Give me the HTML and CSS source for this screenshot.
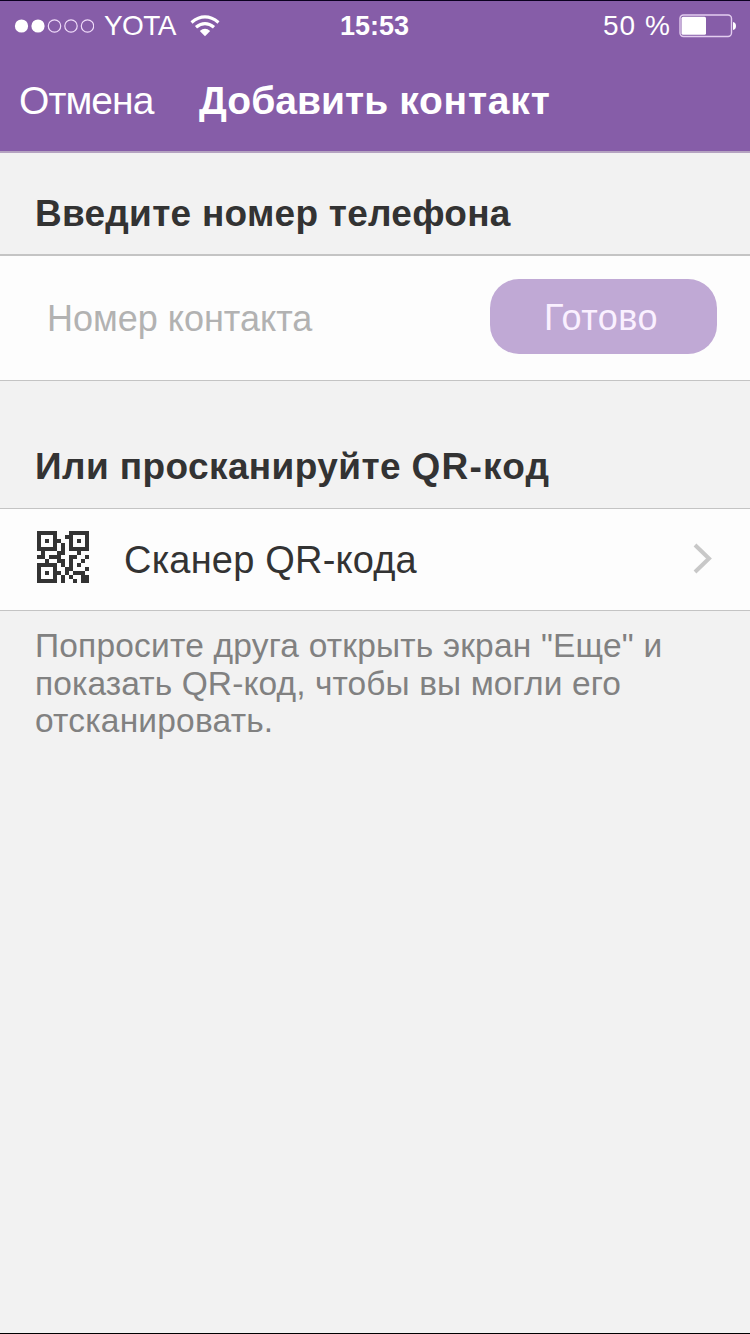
FILE: index.html
```html
<!DOCTYPE html>
<html lang="ru">
<head>
<meta charset="utf-8">
<title>Добавить контакт</title>
<link rel="stylesheet" href="styles.css">
</head>
<body>
<div class="screen">
  <header class="header">
    <div class="status">
      <svg class="signal" width="80" height="16" viewBox="0 0 80 16">
        <circle cx="7.500" cy="8" r="6.600" fill="#fff"/><circle cx="24" cy="8" r="6.600" fill="#fff"/>
        <g fill="none" stroke="#f0dcfa" stroke-width="1.200"><circle cx="40.500" cy="8" r="6.200"/><circle cx="57" cy="8" r="6.200"/><circle cx="73.500" cy="8" r="6.200"/></g>
      </svg>
      <span class="carrier">YOTA</span>
      <svg class="wifi" width="30" height="22" viewBox="0 0 30 22">
        <g fill="none" stroke="#fff" stroke-width="3.200"><path d="M1.500 7.400Q15 -3.500 28.500 7.400"/><path d="M6 12.300Q15 4.800 24 12.300"/></g>
        <path d="M9.800 16Q15 11.500 20.200 16L15 21.300Z" fill="#fff"/>
      </svg>
      <span class="clock">15:53</span>
      <span class="percent">50 %</span>
      <svg class="battery" width="58" height="24" viewBox="0 0 58 24">
        <rect x="1" y="1" width="51.500" height="21.500" rx="3.500" fill="none" stroke="#e3cdef" stroke-width="1.400"/>
        <rect x="2.500" y="2.700" width="24.500" height="18" rx="1.500" fill="#fff"/>
        <path d="M54 8Q57 8.500 57 12T54 16Z" fill="#fff"/>
      </svg>
    </div>
    <nav class="nav">
      <span class="cancel">Отмена</span>
      <h1 class="title">Добавить <span class="title-word">контакт</span></h1>
    </nav>
  </header>
  <h2 class="heading heading-phone">Введите номер телефона</h2>
  <section class="row row-phone">
    <span class="placeholder">Номер контакта</span>
    <button class="done">Готово</button>
  </section>
  <h2 class="heading heading-qr">Или просканируйте <span class="qr-word">QR-код</span></h2>
  <section class="row row-qr">
    <svg class="qr" width="52" height="52" viewBox="0 0 13 13" fill="#333">
      <path fill-rule="evenodd" d="M0 0h5v5H0zM1 1v3h3V1zM8 0h5v5H8zM9 1v3h3V1zM0 8h5v5H0zM1 9v3h3V9z"/>
      <path d="M2 2h1v1H2zM10 2h1v1h-1zM2 10h1v1H2z"/>
      <path d="M7 1h1v1H7zM5 2h1v1H5zM6 3h1v2H6zM1 5h1v1H1zM5 5h2v1H5zM10 5h1v1h-1zM0 6h2v1H0zM3 6h3v1H3zM8 6h2v1H8zM12 6h1v1h-1zM2 7h1v1H2zM5 7h2v1H5zM8 7h1v1H8zM11 7h1v1h-1zM6 8h1v1H6zM8 8h1v1H8zM10 8h1v1h-1zM7 9h2v1H7zM9 10h3v1H9zM12 9h1v1h-1zM5 10h1v1H5zM7 10h1v1H7zM6 11h1v2H6zM8 11h1v1H8zM11 11h2v2h-2zM9 12h1v1H9z"/>
    </svg>
    <span class="scanner">Сканер QR-кода</span>
    <svg class="chevron" width="20" height="32" viewBox="0 0 20 32"><path d="M3 3L17 16.500L3 30" fill="none" stroke="#c8c8c8" stroke-width="4"/></svg>
  </section>
  <p class="hint">Попросите друга открыть экран "Еще" и<br><span class="tight">показать QR-код, чтобы вы могли его</span><br>отсканировать.</p>
</div>
</body>
</html>
```
FILE: styles.css
```css
* { box-sizing: border-box; }
body { margin: 0; font-family: "Liberation Sans", Arial, sans-serif; }
.screen { width: 750px; height: 1334px; background: #f2f2f2; border-top: 1px solid #0b0020; border-bottom: 1px solid #000; overflow: hidden; }
.header { height: 152px; background: #865da8; border-bottom: 2px solid #b5a3c1; color: #fff; }
.status { height: 50px; padding-left: 14px; display: flex; align-items: center; font-size: 28px; }
.signal, .wifi, .battery, .qr, .chevron { flex: none; display: block; }
.carrier { margin-left: 10px; width: 86px; letter-spacing: -0.6px; white-space: nowrap; }
.clock { width: 70px; margin-left: 120px; font-size: 27px; font-weight: bold; white-space: nowrap; }
.percent { width: 68px; margin-left: 193px; letter-spacing: 1px; white-space: nowrap; }
.battery { margin-left: 8px; }
.nav { height: 100px; padding-left: 19px; display: flex; align-items: center; white-space: nowrap; }
.cancel { width: 180px; font-size: 39px; letter-spacing: -0.9px; }
.title { margin: 0; font-size: 39px; letter-spacing: 0.05px; }
.title-word { letter-spacing: 0.8px; }
.heading { margin: 0; padding-left: 35px; font-size: 37px; color: #333; white-space: nowrap; }
.heading-phone { height: 101px; line-height: 121px; letter-spacing: 0.27px; }
.heading-qr { height: 127px; line-height: 171px; letter-spacing: 0.4px; }
.qr-word { letter-spacing: 1.2px; }
.row { display: flex; align-items: center; background: #fdfdfd; border-top: 1px solid #c4c4c4; border-bottom: 1px solid #c4c4c4; white-space: nowrap; }
.row-phone { height: 127px; border-top-width: 2px; padding: 0 0 3px 47px; }
.placeholder { width: 443px; padding-top: 5px; font-size: 36px; color: #b2b2b2; }
.done { width: 227px; height: 75px; padding: 2px 5px 0 0; border: 0; border-radius: 29px; background: #c0a9d5; color: #faf0ff; font: 36px "Liberation Sans", Arial, sans-serif; letter-spacing: 0.5px; }
.row-qr { height: 103px; padding: 0 0 4px 37px; }
.scanner { width: 568px; margin-left: 35px; padding-top: 6px; font-size: 38px; letter-spacing: 0.2px; color: #333; }
.qr { align-self: flex-start; margin-top: 22px; }
.hint { margin: 0; padding: 16px 0 0 35px; font-size: 33.5px; line-height: 37.7px; letter-spacing: 0.2px; color: #818181; white-space: nowrap; }
.tight { letter-spacing: 0.1px; }
```
